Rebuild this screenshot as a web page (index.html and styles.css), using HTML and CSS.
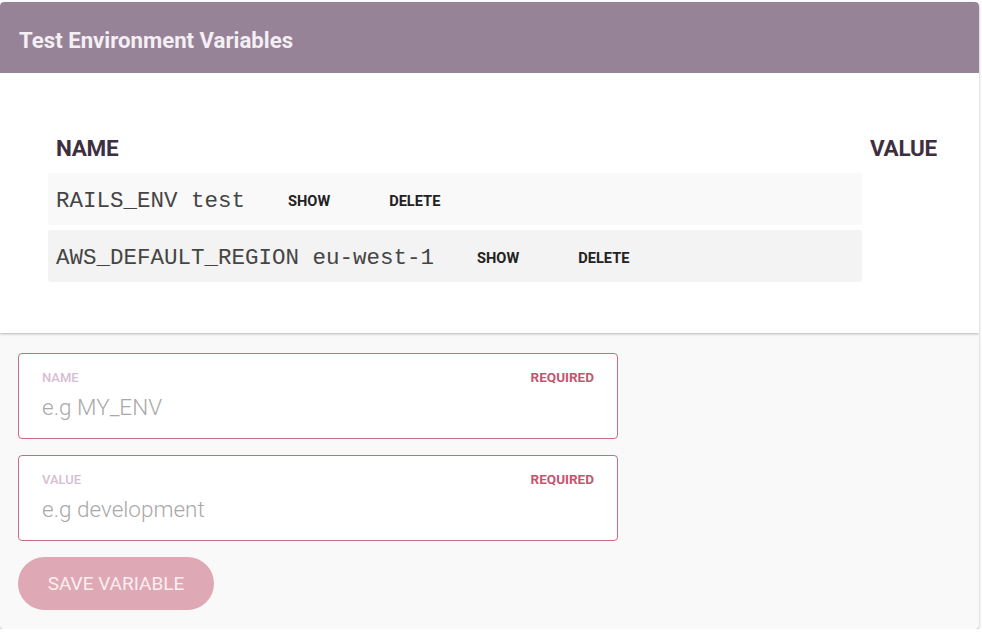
FILE: index.html
```html
<!DOCTYPE html>
<html lang="en">
<head>
<meta charset="utf-8">
<title>Test Environment Variables</title>
<link rel="stylesheet" href="styles.css">
</head>
<body>
<section class="panel">
  <div class="card">
    <header class="card-head">Test Environment Variables</header>
    <div class="card-body">
      <table class="vars">
        <thead>
          <tr><th class="col-name">NAME</th><th class="col-value">VALUE</th></tr>
        </thead>
        <tbody>
          <tr class="row odd">
            <td class="cell">
              <div class="cell-inner">
                <code class="var">RAILS_ENV test</code>
                <button class="act">SHOW</button>
                <button class="act">DELETE</button>
              </div>
            </td>
            <td></td>
          </tr>
          <tr class="row even">
            <td class="cell">
              <div class="cell-inner">
                <code class="var">AWS_DEFAULT_REGION eu-west-1</code>
                <button class="act">SHOW</button>
                <button class="act">DELETE</button>
              </div>
            </td>
            <td></td>
          </tr>
        </tbody>
      </table>
    </div>
  </div>
  <form class="form">
    <label class="field">
      <span class="field-top"><span class="field-label">NAME</span><span class="req">REQUIRED</span></span>
      <input class="field-input" type="text" placeholder="e.g MY_ENV">
    </label>
    <label class="field">
      <span class="field-top"><span class="field-label">VALUE</span><span class="req">REQUIRED</span></span>
      <input class="field-input" type="text" placeholder="e.g development">
    </label>
    <button type="button" class="save">SAVE VARIABLE</button>
  </form>
</section>
</body>
</html>
```

FILE: styles.css
```css
html, body {
  margin: 0;
  padding: 0;
  background: #ffffff;
}
body {
  font-family: Roboto, "Liberation Sans", sans-serif;
  padding: 2px 3px 0 0;
}
.panel {
  background: #f9f9f9;
  border-radius: 4px;
  box-shadow: 0 1px 3px rgba(0,0,0,0.25), 0 2px 2px rgba(0,0,0,0.08);
  height: 627px;
  box-sizing: border-box;
  overflow: hidden;
}
.card {
  background: #ffffff;
  border-radius: 4px 4px 0 0;
  box-shadow: 0 1px 3px rgba(0,0,0,0.28);
  position: relative;
}
.card-head {
  background: #978397;
  color: #f4eff4;
  font-weight: 700;
  font-size: 22.2px;
  height: 71px;
  line-height: 76px;
  padding-left: 19px;
  border-radius: 4px 4px 0 0;
}
.card-body {
  padding: 62px 34px 51px 48px;
}
.vars {
  width: 100%;
  border-collapse: separate;
  border-spacing: 0 5px;
  margin: -5px 0;
}
.vars th {
  text-align: left;
  font-size: 22.5px;
  font-weight: 700;
  color: #3e2f40;
  padding: 0 0 7px 8px;
  height: 22px;
  letter-spacing: -0.3px;
}
.col-value {
  width: 75px;
}
.row .cell {
  padding: 0 8px;
  height: 52px;
  border-radius: 3px;
}
.row.odd .cell { background: #f9f9f9; }
.row.even .cell { background: #f3f3f3; }
.cell-inner {
  display: flex;
  align-items: center;
  gap: 27px;
  padding-top: 4px;
}
.var {
  font-family: "Liberation Mono", "Courier New", monospace;
  font-size: 22.5px;
  color: #454545;
}
.act {
  background: none;
  border: none;
  font-family: Roboto, "Liberation Sans", sans-serif;
  font-weight: 700;
  font-size: 14.6px;
  color: #222;
  padding: 0 16px;
  margin: 0;
  letter-spacing: 0;
}
.form {
  padding: 20px 18px 0 18px;
  display: flex;
  flex-direction: column;
  align-items: flex-start;
  gap: 16px;
}
.field {
  display: flex;
  flex-direction: column;
  width: 600px;
  height: 86px;
  box-sizing: border-box;
  border: 1.5px solid #c96b81;
  border-radius: 4px;
  background: #ffffff;
  padding: 15px 23px 0 23px;
}
.field-top {
  display: flex;
  justify-content: space-between;
  align-items: center;
  height: 16px;
}
.field-label {
  font-size: 13px;
  font-weight: 500;
  color: #d6bdd2;
}
.req {
  font-size: 13.5px;
  font-weight: 700;
  color: #c5556f;
}
.field-input {
  border: none;
  outline: none;
  background: transparent;
  font-family: Roboto, "Liberation Sans", sans-serif;
  font-weight: 300;
  font-size: 22.5px;
  color: #555;
  padding: 0;
  margin-top: 6px;
  height: 32px;
}
.field-input::placeholder {
  color: #a9a9a9;
}
.save {
  background: #dfa8b5;
  color: #fbeef1;
  border: none;
  border-radius: 27px;
  width: 196px;
  height: 53px;
  font-family: Roboto, "Liberation Sans", sans-serif;
  font-size: 19px;
  font-weight: 400;
  padding: 0;
}
```
